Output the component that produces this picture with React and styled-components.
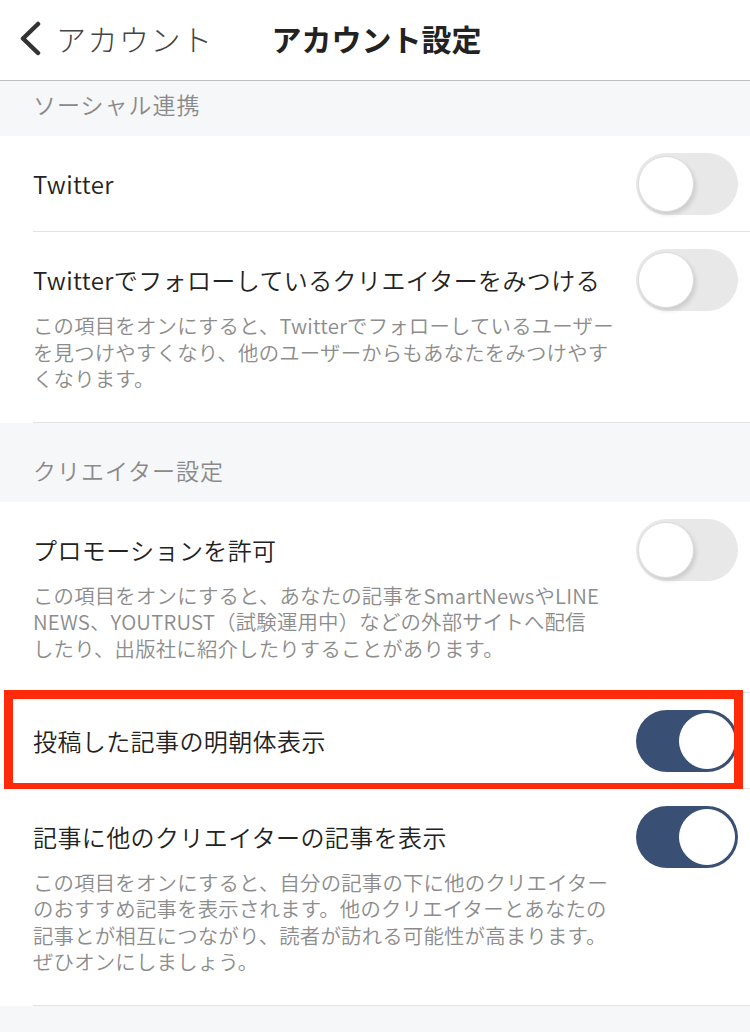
import React from "react";
import styled, { createGlobalStyle, css } from "styled-components";

const Global = createGlobalStyle`
  html, body { margin: 0; padding: 0; }
  body {
    background: #f6f7f9;
    font-family: "Noto Sans CJK JP", "Noto Sans", sans-serif;
    -webkit-font-smoothing: antialiased;
  }
`;

const Page = styled.div`
  width: 750px;
  min-height: 1032px;
  background: #f6f7f9;
  overflow: hidden;
`;

const Header = styled.header`
  height: 81px;
  box-sizing: border-box;
  display: flex;
  align-items: flex-start;
  padding: 20px 0 0 18px;
  background: #fff;
  border-bottom: 1px solid #bdbdbd;
`;

const BackButton = styled.div`
  display: flex;
  align-items: center;
  gap: 14px;
  height: 36px;
  color: #444;
  font-size: 30px;
  font-weight: 300;
  letter-spacing: 1.5px;
`;

const Title = styled.h1`
  margin: 0 0 0 58px;
  font-size: 30px;
  line-height: 36px;
  font-weight: 700;
  color: #222;
`;

const SectionHeader = styled.div`
  box-sizing: border-box;
  height: ${(p) => p.$h}px;
  display: flex;
  align-items: flex-end;
  padding: 0 0 20px 33px;
  background: #f6f7f9;
  color: #8a8a8a;
  font-size: 23px;
  line-height: 24px;
  font-weight: 350;
  letter-spacing: 1px;
`;

const RowOuter = styled.div`
  position: relative;
  background: #fff;
  padding-left: 33px;
  ${(p) =>
    p.$highlight &&
    css`
      &::after {
        content: "";
        position: absolute;
        left: 4px;
        right: 7px;
        top: -3px;
        bottom: -3px;
        border: 9px solid #ff2a0a;
        pointer-events: none;
      }
    `}
`;

const RowInner = styled.div`
  display: flex;
  align-items: flex-start;
  justify-content: space-between;
  padding: 17px 12px 16px 0;
  border-bottom: 1px solid #e3e3e3;
`;

const TextCol = styled.div`
  display: flex;
  flex-direction: column;
`;

const RowTitle = styled.div`
  font-size: 24px;
  line-height: 62px;
  font-weight: 350;
  letter-spacing: 0.4px;
  color: #222;
  white-space: nowrap;
`;

const Desc = styled.p`
  margin: 1px 0 14px;
  font-size: 20.4px;
  line-height: 26.6px;
  font-weight: 350;
  letter-spacing: 0.2px;
  color: #8c8c8c;
  white-space: nowrap;
`;

const Track = styled.div`
  position: relative;
  flex: none;
  width: 102px;
  height: 62px;
  border-radius: 31px;
  background: ${(p) => (p.$on ? "#3a4f74" : "#e8e8e8")};
`;

const Knob = styled.div`
  position: absolute;
  top: 3px;
  left: ${(p) => (p.$on ? "43px" : "2px")};
  width: 56px;
  height: 56px;
  border-radius: 50%;
  background: #fff;
  box-sizing: border-box;
  border: 1px solid ${(p) => (p.$on ? "#fff" : "#dcdcdc")};
  box-shadow: ${(p) => (p.$on ? "none" : "2px 3px 4px rgba(0,0,0,0.12)")};
`;

const Toggle = ({ on }) => (
  <Track $on={on}>
    <Knob $on={on} />
  </Track>
);

const Row = ({ title, desc, on, highlight }) => (
  <RowOuter $highlight={highlight}>
    <RowInner>
      <TextCol>
        <RowTitle>{title}</RowTitle>
        {desc && (
          <Desc>
            {desc.map((l, i) => (
              <React.Fragment key={i}>
                {l}
                {i < desc.length - 1 && <br />}
              </React.Fragment>
            ))}
          </Desc>
        )}
      </TextCol>
      <Toggle on={on} />
    </RowInner>
  </RowOuter>
);

const Chevron = () => (
  <svg width="24" height="36" viewBox="0 0 24 36">
    <path
      d="M20 4 L5 18.5 L20 33"
      fill="none"
      stroke="#333"
      strokeWidth="4.5"
      strokeLinecap="round"
      strokeLinejoin="round"
    />
  </svg>
);

export default function App() {
  return (
    <Page>
      <Global />
      <Header>
        <BackButton>
          <Chevron />
          <span>アカウント</span>
        </BackButton>
        <Title>アカウント設定</Title>
      </Header>

      <SectionHeader $h={55}>ソーシャル連携</SectionHeader>
      <Row title="Twitter" on={false} />
      <Row
        title="Twitterでフォローしているクリエイターをみつける"
        on={false}
        desc={[
          "この項目をオンにすると、Twitterでフォローしているユーザー",
          "を見つけやすくなり、他のユーザーからもあなたをみつけやす",
          "くなります。",
        ]}
      />

      <SectionHeader $h={79}>クリエイター設定</SectionHeader>
      <Row
        title="プロモーションを許可"
        on={false}
        desc={[
          "この項目をオンにすると、あなたの記事をSmartNewsやLINE",
          "NEWS、YOUTRUST（試験運用中）などの外部サイトへ配信",
          "したり、出版社に紹介したりすることがあります。",
        ]}
      />
      <Row title="投稿した記事の明朝体表示" on={true} highlight />
      <Row
        title="記事に他のクリエイターの記事を表示"
        on={true}
        desc={[
          "この項目をオンにすると、自分の記事の下に他のクリエイター",
          "のおすすめ記事を表示されます。他のクリエイターとあなたの",
          "記事とが相互につながり、読者が訪れる可能性が高まります。",
          "ぜひオンにしましょう。",
        ]}
      />
    </Page>
  );
}
